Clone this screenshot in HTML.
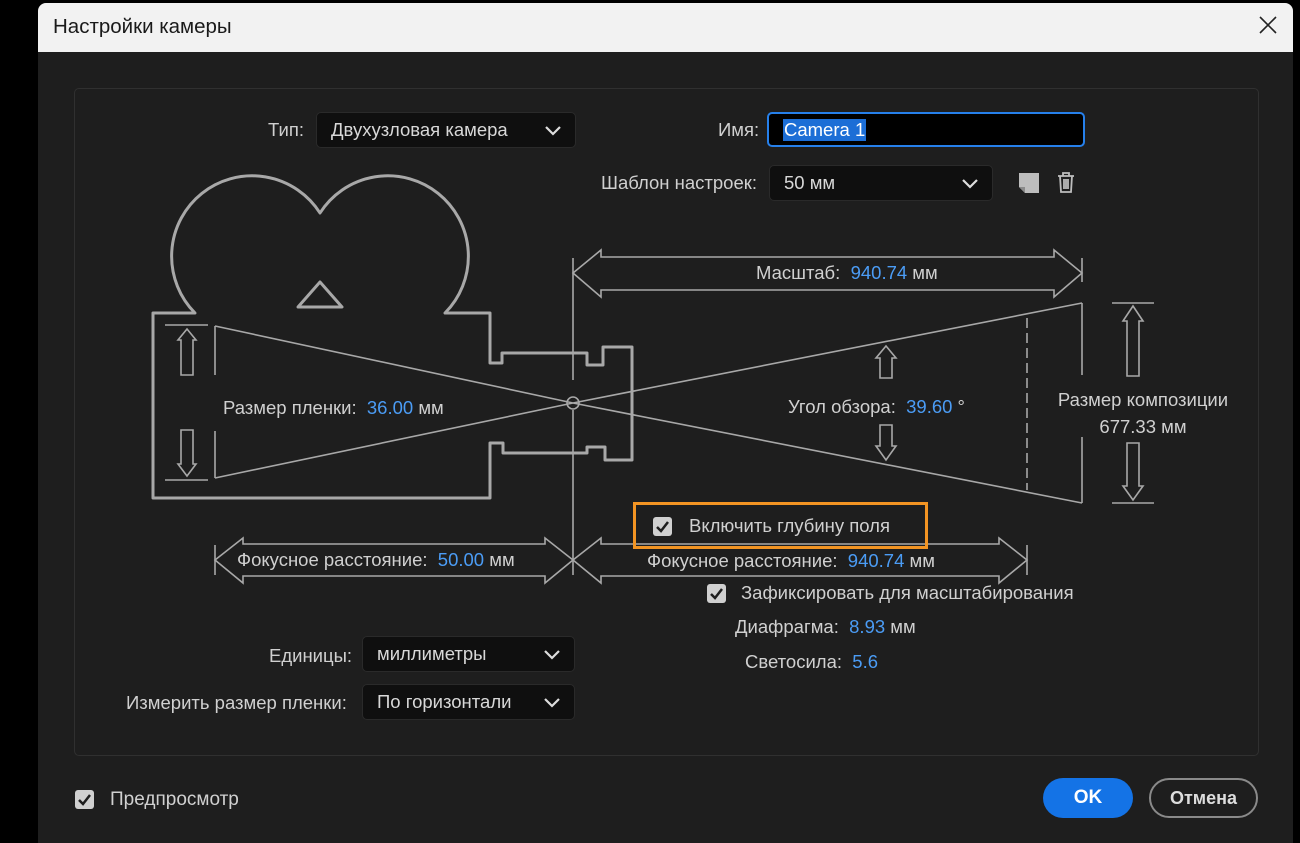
<!DOCTYPE html>
<html><head><meta charset="utf-8"><style>
*{margin:0;padding:0;box-sizing:border-box}
body{width:1300px;height:840px;background:#000;position:relative;overflow:hidden;font-family:"Liberation Sans","Noto Sans CJK SC",sans-serif;color:#d0d0d0;font-size:18.5px}
.dlg{position:absolute;left:38px;top:3px;width:1255px;height:840px;background:#1e1e1e;border-radius:8px 8px 0 0;overflow:hidden}
.title{position:absolute;left:0;top:0;width:100%;height:49px;background:#f2f2f2;color:#1a1a1a;font-size:20.5px;padding:12px 0 0 15px}
.t{position:absolute;white-space:nowrap}
.b{color:#4b9cf5}
.dd{position:absolute;background:#0f0f0f;border:1px solid #2a2a2a;border-radius:5px;color:#d8d8d8;padding:6px 0 0 14px}
.dd svg{position:absolute;right:14px;top:13px}
.cb{position:absolute;width:19px;height:19px;background:#d0d0d0;border-radius:3px}
.cb svg{position:absolute;left:2px;top:2px}
.btn{position:absolute;border-radius:20px;font-weight:bold;text-align:center}
</style></head><body>
<div class="dlg">
<div class="title">Настройки камеры</div>
<svg style="position:absolute;left:1220px;top:12px" width="20" height="20"><path d="M2 2L18 18M18 2L2 18" stroke="#222" stroke-width="1.6"/></svg>
</div>
<div style="position:absolute;left:74px;top:88px;width:1185px;height:668px;border:1px solid #303030;border-radius:5px"></div>

<svg style="position:absolute;left:0;top:0" width="1300" height="840" fill="none" stroke="#a8a8a8" stroke-width="3">
<path d="M153 313H195 A80.5 80.5 0 1 1 320 213 A80.5 80.5 0 1 1 445 313H490V363H502V353H587V365H603V347H632V460H605V447H587V453H503V443H490V498H153Z" stroke-linejoin="round"/>
<path d="M298 307L320 282L342 307Z" stroke-linejoin="round"/>
<g stroke-width="1.6">
<path d="M215 326V375M215 431V478M215 326L573 403L215 478"/>
<path d="M165 325H208M165 480H208"/>
<path d="M181 375V340H178L187 329L196 340H193V375Z"/>
<path d="M181 430V464H178L187 476L196 464H193V430Z"/>
<path d="M573 258V380M573 410V575"/>
<circle cx="573" cy="403" r="6"/>
<path d="M573 403L1082 303M573 403L1082 503"/>
<path d="M1082 303V375M1082 437V503"/>
<path d="M1027 318V490" stroke-dasharray="10 5"/>
<path d="M1112 303H1154M1112 503H1154"/>
<path d="M1127 376V321H1123L1133 306L1143 321H1139V376Z"/>
<path d="M1127 443V486H1123L1133 500L1143 486H1139V443Z"/>
<path d="M1082 258V282"/>
<path d="M573 273L601 250V257H1054V250L1082 273L1054 297V290H601V297Z"/>
<path d="M880 378V358H876L886 346L896 358H892V378Z"/>
<path d="M880 425V446H876L886 460L896 446H892V425Z"/>
<path d="M215 545V575"/>
<path d="M215 560L243 538V544H545V538L573 560L545 583V576H243V583Z"/>
<path d="M573 560L601 538V544H999V538L1027 560L999 583V576H601V583Z"/>
<path d="M1027 545V575"/>
</g>
</svg>

<div class="t" style="left:268px;top:119px">Тип:</div>
<div class="dd" style="left:316px;top:112px;width:260px;height:36px">Двухузловая камера<svg width="16" height="10"><path d="M1 1L8 8L15 1" stroke="#ddd" stroke-width="2.2" fill="none"/></svg></div>
<div class="t" style="left:718px;top:119px">Имя:</div>
<div style="position:absolute;left:767px;top:112px;width:318px;height:35px;background:#000;border:2px solid #2680eb;border-radius:5px"><span style="position:absolute;left:14px;top:5px;background:#1c6ed6;color:#fff;padding:0 1px">Camera 1</span></div>
<div class="t" style="left:601px;top:172px">Шаблон настроек:</div>
<div class="dd" style="left:769px;top:165px;width:224px;height:36px">50 мм<svg width="16" height="10"><path d="M1 1L8 8L15 1" stroke="#ddd" stroke-width="2.2" fill="none"/></svg></div>
<svg style="position:absolute;left:1019px;top:173px" width="22" height="22"><path d="M0 0H20V20H6L0 14Z" fill="#bdbdbd"/><path d="M0 14H6V20Z" fill="#8a8a8a"/></svg>
<svg style="position:absolute;left:1057px;top:172px" width="18" height="22" fill="none" stroke="#bdbdbd" stroke-width="1.8"><path d="M1 4H17M6 4V1H12V4M3 4L4 20H14L15 4M7 7V17M9 7V17M11 7V17"/></svg>

<div class="t" style="left:756px;top:262px">Масштаб:&nbsp; <span class="b">940.74</span> мм</div>
<div class="t" style="left:223px;top:397px">Размер пленки:&nbsp; <span class="b">36.00</span> мм</div>
<div class="t" style="left:788px;top:396px">Угол обзора:&nbsp; <span class="b">39.60</span> °</div>
<div class="t" style="left:1043px;top:386px;text-align:center;width:200px;line-height:27px">Размер композиции<br>677.33 мм</div>

<div style="position:absolute;left:633px;top:502px;width:295px;height:47px;border:3px solid #f29423"></div>
<div class="cb" style="left:653px;top:517px"><svg width="15" height="15"><path d="M2 8L6 12L13 3" stroke="#1e1e1e" stroke-width="2.5" fill="none"/></svg></div>
<div class="t" style="left:689px;top:515px">Включить глубину поля</div>

<div class="t" style="left:237px;top:549px">Фокусное расстояние:&nbsp; <span class="b">50.00</span> мм</div>
<div class="t" style="left:647px;top:550px">Фокусное расстояние:&nbsp; <span class="b">940.74</span> мм</div>
<div class="cb" style="left:707px;top:584px"><svg width="15" height="15"><path d="M2 8L6 12L13 3" stroke="#1e1e1e" stroke-width="2.5" fill="none"/></svg></div>
<div class="t" style="left:741px;top:582px">Зафиксировать для масштабирования</div>
<div class="t" style="left:735px;top:616px">Диафрагма:&nbsp; <span class="b">8.93</span> мм</div>
<div class="t" style="left:745px;top:651px">Светосила:&nbsp; <span class="b">5.6</span></div>

<div class="t" style="left:269px;top:645px">Единицы:</div>
<div class="dd" style="left:362px;top:636px;width:213px;height:36px">миллиметры<svg width="16" height="10"><path d="M1 1L8 8L15 1" stroke="#ddd" stroke-width="2.2" fill="none"/></svg></div>
<div class="t" style="left:126px;top:692px">Измерить размер пленки:</div>
<div class="dd" style="left:362px;top:684px;width:213px;height:36px">По горизонтали<svg width="16" height="10"><path d="M1 1L8 8L15 1" stroke="#ddd" stroke-width="2.2" fill="none"/></svg></div>

<div class="cb" style="left:75px;top:790px"><svg width="15" height="15"><path d="M2 8L6 12L13 3" stroke="#1e1e1e" stroke-width="2.5" fill="none"/></svg></div>
<div class="t" style="left:110px;top:789px;font-size:19px">Предпросмотр</div>
<div class="btn" style="left:1043px;top:778px;width:90px;height:40px;background:#1473e6;color:#fff;padding-top:9px;font-size:19px">OK</div>
<div class="btn" style="left:1149px;top:778px;width:109px;height:40px;border:2px solid #8a8a8a;color:#ddd;padding-top:8px;font-size:18px">Отмена</div>
</body></html>
